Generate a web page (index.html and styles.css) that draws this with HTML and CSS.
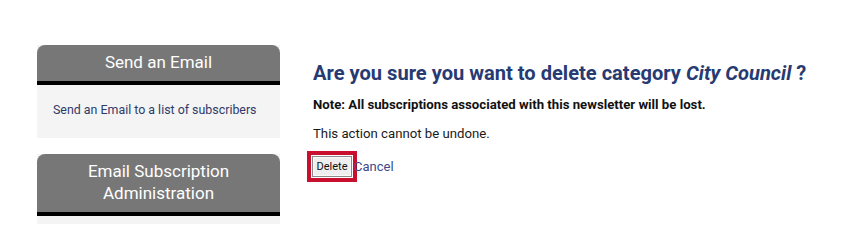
FILE: index.html
```
<!DOCTYPE html>
<html lang="en">
<head>
<meta charset="utf-8">
<title>Delete category</title>
<link rel="stylesheet" href="styles.css">
</head>
<body>
<div class="page">
  <aside class="sidebar">
    <section class="panel">
      <h2 class="panel-head">Send an Email</h2>
      <div class="panel-body"><a class="panel-link" href="#">Send an Email to a list of subscribers</a></div>
    </section>
    <section class="panel">
      <h2 class="panel-head">Email Subscription Administration</h2>
      <div class="panel-body panel-body-cut"></div>
    </section>
  </aside>
  <main class="main">
    <h1 class="title">Are you sure you want to delete category <em>City Council</em> ?</h1>
    <p class="note">Note: All subscriptions associated with this newsletter will be lost.</p>
    <p class="warn">This action cannot be undone.</p>
    <div class="actions"><button class="btn" type="button">Delete</button><a class="cancel" href="#">Cancel</a></div>
  </main>
</div>
</body>
</html>
```
FILE: styles.css
```
html, body {
  margin: 0;
  padding: 0;
  background: #ffffff;
}
body {
  font-family: Roboto, "Liberation Sans", Arial, sans-serif;
  color: #111111;
  height: 225px;
  overflow: hidden;
}
.page {
  display: flex;
  padding: 45px 0 0 37px;
  gap: 33px;
}
.sidebar {
  width: 243px;
  flex: none;
  display: flex;
  flex-direction: column;
  gap: 16px;
}
.panel {
  background: #f4f4f4;
}
.panel-head {
  margin: 0;
  background: #777777;
  color: #ffffff;
  font-weight: 400;
  font-size: 17px;
  line-height: 21.5px;
  text-align: center;
  padding: 7px 30px 7.5px;
  border-radius: 8px 8px 0 0;
  border-bottom: 4px solid #000000;
}
.panel-body {
  padding: 14px 16px 18px;
  min-height: 20px;
}
.panel-body-cut {
  padding: 4px 16px;
  min-height: 0;
}
.panel-link {
  color: #2f3a6b;
  font-size: 12.4px;
  line-height: 20px;
  text-decoration: none;
}
.main {
  flex: 1;
  min-width: 0;
}
.title {
  margin: 16px 0 0;
  font-size: 20.1px;
  line-height: 24px;
  font-weight: 700;
  color: #273a72;
}
.title em {
  font-style: italic;
}
.note {
  margin: 12px 0 0;
  font-size: 13.2px;
  line-height: 16px;
  font-weight: 700;
  color: #111111;
}
.warn {
  margin: 12px 0 0;
  font-size: 13.2px;
  line-height: 17px;
  color: #1a1a1a;
}
.actions {
  margin: 14px 0 0;
  display: flex;
  align-items: center;
}
.btn {
  font-family: Roboto, "Liberation Sans", Arial, sans-serif;
  font-size: 11px;
  line-height: 13px;
  height: 21px;
  width: 40px;
  padding: 0;
  margin: 0 0 0 -1px;
  color: #111111;
  background: #efefef;
  border: 1px solid #8a8a8a;
  box-shadow: inset 0 0 0 1px #fafafa;
  outline: 4px solid #c8102e;
  outline-offset: 1px;
}
.cancel {
  margin-left: 2px;
  font-size: 13px;
  line-height: 16px;
  color: #3b4a8c;
  text-decoration: none;
}
```
